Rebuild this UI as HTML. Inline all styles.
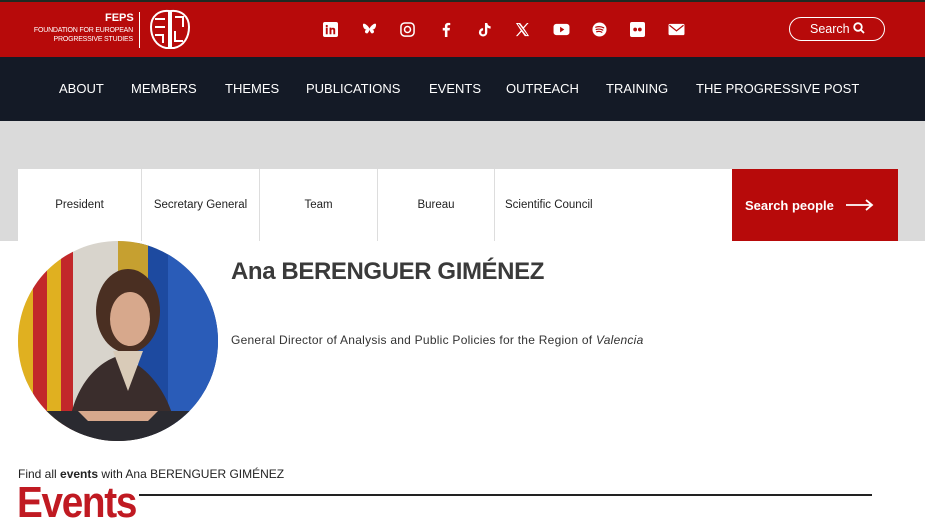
<!DOCTYPE html>
<html><head><meta charset="utf-8"><style>
*{margin:0;padding:0;box-sizing:border-box}
body{width:925px;height:532px;overflow:hidden;background:#fff;font-family:"Liberation Sans",sans-serif;position:relative}
.top{position:absolute;left:0;top:0;width:925px;height:57px;background:#b70a0a;border-top:2px solid #1e2a22}
.nav{position:absolute;left:0;top:57px;width:925px;height:64px;background:#141a26;color:#fff;font-size:13px}
.nav span{position:absolute;top:24px}
.gray{position:absolute;left:0;top:121px;width:925px;height:120px;background:#dadada}
.tabs{position:absolute;left:18px;top:169px;width:714px;height:72px;background:#fff;font-size:11.5px;color:#222}
.tab{position:absolute;top:0;height:72px;border-right:1px solid #ddd;display:flex;align-items:center;justify-content:center}
.sp{position:absolute;left:732px;top:169px;width:166px;height:72px;background:#b70a0a;color:#fff;font-weight:bold;font-size:13px;display:flex;align-items:center;padding-left:13px}
.ic{position:absolute;top:20px;width:15px;height:15px}
</style></head><body>
<div class="top">
 <div style="position:absolute;left:105px;top:10px;color:#fff;font-weight:bold;font-size:11px">FEPS</div>
 <div style="position:absolute;left:18px;top:24px;color:#fff;font-size:7px;width:115px;text-align:right;line-height:9px;letter-spacing:-.2px">FOUNDATION FOR EUROPEAN<br>PROGRESSIVE STUDIES</div>
 <div style="position:absolute;left:139px;top:10px;width:1px;height:36px;background:#fff"></div>
 <svg style="position:absolute;left:147px;top:5px" width="46" height="46" viewBox="0 0 46 46" fill="none" stroke="#fff" stroke-width="2"><path d="M22 4C12 3 4 9 4 20c0 10 5 19 15 21h3V4zM24 4c10-1 18 5 18 16 0 10-5 19-15 21h-3V4z"/><path d="M8 12h10M8 20h10M8 28h8v8M28 10h8v10M28 24v10h8"/></svg>
 <svg class="ic" style="left:323px" viewBox="0 0 16 16"><rect width="16" height="16" rx="2" fill="#fff"/><path d="M3 6h2v7H3zM4 3a1.2 1.2 0 1 0 0 2.4A1.2 1.2 0 0 0 4 3zM7 6h2v1c.5-1 3.5-1.5 4 1v5h-2V9c0-1.5-2-1.5-2 0v4H7z" fill="#b70a0a"/></svg>
 <svg class="ic" style="left:361px;width:17px" viewBox="0 0 16 16"><path d="M8 7C6 3 1 0 1 3c0 2 1 5 4 5-3 1-2 5 1 4 1-1 2-3 2-4 0 1 1 3 2 4 3 1 4-3 1-4 3 0 4-3 4-5 0-3-5 0-7 4z" fill="#fff"/></svg>
 <svg class="ic" style="left:400px" viewBox="0 0 16 16" fill="none" stroke="#fff" stroke-width="1.6"><rect x="1" y="1" width="14" height="14" rx="4"/><circle cx="8" cy="8" r="3.2"/></svg>
 <svg class="ic" style="left:439px" viewBox="0 0 16 16"><path d="M9 16V9h2.3l.4-2.7H9V4.6c0-.8.3-1.3 1.4-1.3H12V1c-.3 0-1.2-.1-2.2-.1C7.7.9 6.3 2.2 6.3 4.4v1.9H4V9h2.3v7z" fill="#fff"/></svg>
 <svg class="ic" style="left:477px" viewBox="0 0 16 16"><path d="M8.5 1h2.5c.2 2 1.5 3.3 3.5 3.5V7c-1.3 0-2.5-.4-3.5-1.1V11a4.5 4.5 0 1 1-4.5-4.5v2.6A2 2 0 1 0 8.5 11z" fill="#fff"/></svg>
 <svg class="ic" style="left:515px" viewBox="0 0 16 16"><path d="M1 1h4.5l3.3 4.5L12.8 1h1.7L9.6 6.6 15 15h-4.5L7 10.2 2.7 15H1l5.2-6z" fill="#fff"/><path d="M3.5 2.2l9 11.6" stroke="#b70a0a" stroke-width="1"/></svg>
 <svg class="ic" style="left:553px;width:17px" viewBox="0 0 17 16"><rect y="2" width="17" height="12" rx="3" fill="#fff"/><path d="M7 5v6l4.5-3z" fill="#b70a0a"/></svg>
 <svg class="ic" style="left:592px" viewBox="0 0 16 16"><circle cx="8" cy="8" r="7.5" fill="#fff"/><path d="M4 5.5c3-1 6-.7 8.5.7M4.5 8c2.5-.8 5-.5 7 .6M5 10.4c2-.6 4-.4 5.5.5" stroke="#b70a0a" stroke-width="1.3" fill="none" stroke-linecap="round"/></svg>
 <svg class="ic" style="left:630px" viewBox="0 0 16 16"><rect width="16" height="16" rx="2" fill="#fff"/><circle cx="5.5" cy="8" r="2" fill="#b70a0a"/><circle cx="10.5" cy="8" r="2" fill="#b70a0a"/></svg>
 <svg class="ic" style="left:668px;width:17px" viewBox="0 0 17 16"><rect y="2" width="17" height="12" rx="1.5" fill="#fff"/><path d="M1 3.5l7.5 6 7.5-6" stroke="#b70a0a" stroke-width="1.3" fill="none"/></svg>
 <div style="position:absolute;left:789px;top:15px;width:96px;height:24px;border:1.3px solid #fff;border-radius:12px;color:#fff;font-size:12.5px;padding:4px 0 0 20px">Search <svg width="12" height="12" viewBox="0 0 12 12" style="vertical-align:-1px" fill="none" stroke="#fff" stroke-width="1.8"><circle cx="5" cy="5" r="3.8"/><path d="M7.8 7.8L11 11"/></svg></div>
</div>
<div class="nav">
 <span style="left:59px">ABOUT</span><span style="left:131px">MEMBERS</span><span style="left:225px">THEMES</span><span style="left:306px">PUBLICATIONS</span><span style="left:429px">EVENTS</span><span style="left:506px">OUTREACH</span><span style="left:606px">TRAINING</span><span style="left:696px">THE PROGRESSIVE POST</span>
</div>
<div class="gray"></div>
<div class="tabs">
 <div class="tab" style="left:0;width:124px">President</div>
 <div class="tab" style="left:124px;width:118px">Secretary General</div>
 <div class="tab" style="left:242px;width:118px">Team</div>
 <div class="tab" style="left:360px;width:117px">Bureau</div>
 <div class="tab" style="left:477px;width:237px;border:none;justify-content:flex-start;padding-left:10px">Scientific Council</div>
</div>
<div class="sp">Search people <svg style="margin-left:12px" width="28" height="12" viewBox="0 0 28 12" fill="none" stroke="#fff" stroke-width="1.8"><path d="M0 6h26M20 1l6 5-6 5"/></svg></div>
<svg style="position:absolute;left:18px;top:241px" width="200" height="200" viewBox="0 0 200 200">
 <defs><clipPath id="c"><circle cx="100" cy="100" r="100"/></clipPath></defs>
 <g clip-path="url(#c)">
  <rect width="200" height="200" fill="#d8d4cc"/>
  <rect x="0" y="0" width="15" height="200" fill="#e0b020"/><rect x="15" y="0" width="14" height="200" fill="#c2282a"/><rect x="29" y="0" width="14" height="200" fill="#e0b020"/><rect x="43" y="0" width="12" height="200" fill="#c2282a"/>
  <rect x="120" y="0" width="80" height="200" fill="#1d4aa0"/>
  <rect x="150" y="0" width="50" height="200" fill="#2a5cb8"/>
  <rect x="100" y="0" width="30" height="60" fill="#c6a030"/>
  <path d="M50 200c0-40 20-75 50-85 30 8 55 40 60 85z" fill="#3a2d2c"/>
  <ellipse cx="110" cy="70" rx="32" ry="42" fill="#4a2f22"/>
  <ellipse cx="112" cy="78" rx="20" ry="27" fill="#d7a88c"/>
  <path d="M95 110l15 40 15-40z" fill="#d9cbb8"/>
  <rect x="0" y="170" width="200" height="30" fill="#2a2a30"/>
  <path d="M60 170h80l-10 10H70z" fill="#d7a88c"/>
 </g>
</svg>
<div style="position:absolute;left:231px;top:258px;font-size:24px;font-weight:bold;color:#3a3a3a;letter-spacing:-.4px">Ana BERENGUER GIMÉNEZ</div>
<div style="position:absolute;left:231px;top:333px;font-size:12px;color:#333;letter-spacing:.25px">General Director of Analysis and Public Policies for the Region of <i>Valencia</i></div>
<div style="position:absolute;left:18px;top:467px;font-size:12px;color:#222">Find all <b>events</b> with Ana BERENGUER GIMÉNEZ</div>
<div style="position:absolute;left:17px;top:478px;font-size:44px;font-weight:bold;color:#c01a22;letter-spacing:-1.5px;transform:scaleX(.88);transform-origin:left">Events</div>
<div style="position:absolute;left:139px;top:494px;width:733px;height:1.5px;background:#222"></div>
</body></html>
